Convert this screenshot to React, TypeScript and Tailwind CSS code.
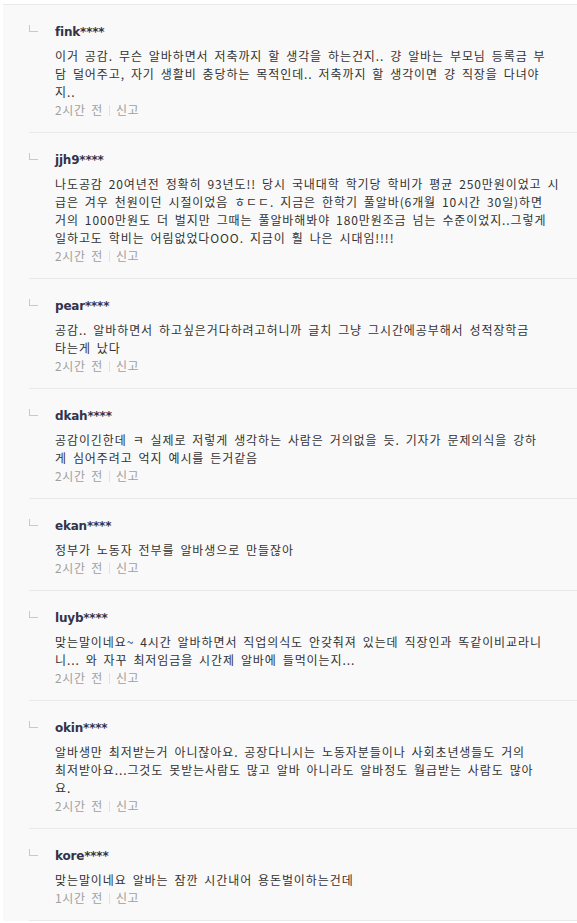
import React from 'react';

interface Comment {
  user: string;
  lines: string[];
  time: string;
}

const comments: Comment[] = [
  {
    user: 'fink****',
    lines: [
      '이거 공감. 무슨 알바하면서 저축까지 할 생각을 하는건지.. 걍 알바는 부모님 등록금 부',
      '담 덜어주고, 자기 생활비 충당하는 목적인데.. 저축까지 할 생각이면 걍 직장을 다녀야',
      '지..',
    ],
    time: '2시간 전',
  },
  {
    user: 'jjh9****',
    lines: [
      '나도공감 20여년전 정확히 93년도!! 당시 국내대학 학기당 학비가 평균 250만원이었고 시',
      '급은 겨우 천원이던 시절이었음 ㅎㄷㄷ. 지금은 한학기 풀알바(6개월 10시간 30일)하면',
      '거의 1000만원도 더 벌지만 그때는 풀알바해봐야 180만원조금 넘는 수준이었지..그렇게',
      '일하고도 학비는 어림없었다OOO. 지금이 훨 나은 시대임!!!!',
    ],
    time: '2시간 전',
  },
  {
    user: 'pear****',
    lines: [
      '공감.. 알바하면서 하고싶은거다하려고허니까 글치 그냥 그시간에공부해서 성적장학금',
      '타는게 났다',
    ],
    time: '2시간 전',
  },
  {
    user: 'dkah****',
    lines: [
      '공감이긴한데 ㅋ 실제로 저렇게 생각하는 사람은 거의없을 듯. 기자가 문제의식을 강하',
      '게 심어주려고 억지 예시를 든거같음',
    ],
    time: '2시간 전',
  },
  {
    user: 'ekan****',
    lines: ['정부가 노동자 전부를 알바생으로 만들잖아'],
    time: '2시간 전',
  },
  {
    user: 'luyb****',
    lines: [
      '맞는말이네요~ 4시간 알바하면서 직업의식도 안갖춰져 있는데 직장인과 똑같이비교라니',
      '니... 와 자꾸 최저임금을 시간제 알바에 들먹이는지...',
    ],
    time: '2시간 전',
  },
  {
    user: 'okin****',
    lines: [
      '알바생만 최저받는거 아니잖아요. 공장다니시는 노동자분들이나 사회초년생들도 거의',
      '최저받아요...그것도 못받는사람도 많고 알바 아니라도 알바정도 월급받는 사람도 많아',
      '요.',
    ],
    time: '2시간 전',
  },
  {
    user: 'kore****',
    lines: ['맞는말이네요 알바는 잠깐 시간내어 용돈벌이하는건데'],
    time: '1시간 전',
  },
];

function CommentItem({ c, first, last }: { c: Comment; first: boolean; last: boolean }) {
  return (
    <li
      className={`relative ml-[26px] pl-[26px] pt-[19px] pb-[13px] border-[#e9e9e9] ${first ? '' : 'border-t'} ${last ? 'border-b' : ''}`}
    >
      {/* reply corner */}
      <span className="absolute left-0 top-[20px] w-[9px] h-[7px] border-l border-b border-[#c9c9c9]" />
      <div className="text-[12px] leading-[16px] font-bold text-[#33334a] font-['DejaVu_Sans',sans-serif] tracking-[-0.2px] [word-spacing:0px]">
        {c.user}
      </div>
      <div className="mt-[7px] text-[12px] leading-[18px] text-[#333] tracking-[0.9px]">
        {c.lines.map((l, i) => (
          <div key={i} className="whitespace-nowrap">{l}</div>
        ))}
      </div>
      <div className="flex items-center text-[12px] leading-[18px] text-[#a0a0a0] tracking-[0.6px]">
        <span>{c.time}</span>
        <span className="w-px h-[11px] bg-[#e2e2e2] mx-[6px]" />
        <span>신고</span>
      </div>
    </li>
  );
}

export default function App() {
  return (
    <div className="bg-white w-[577px] h-[923px] pt-[4px] pl-[3px] overflow-hidden font-['Noto_Sans_CJK_KR',sans-serif] [word-spacing:2.4px]">
      <ul className="bg-[#f9f9f9] border-t border-[#e9e9e9]">
        {comments.map((c, i) => (
          <CommentItem key={c.user} c={c} first={i === 0} last={i === comments.length - 1} />
        ))}
      </ul>
    </div>
  );
}
